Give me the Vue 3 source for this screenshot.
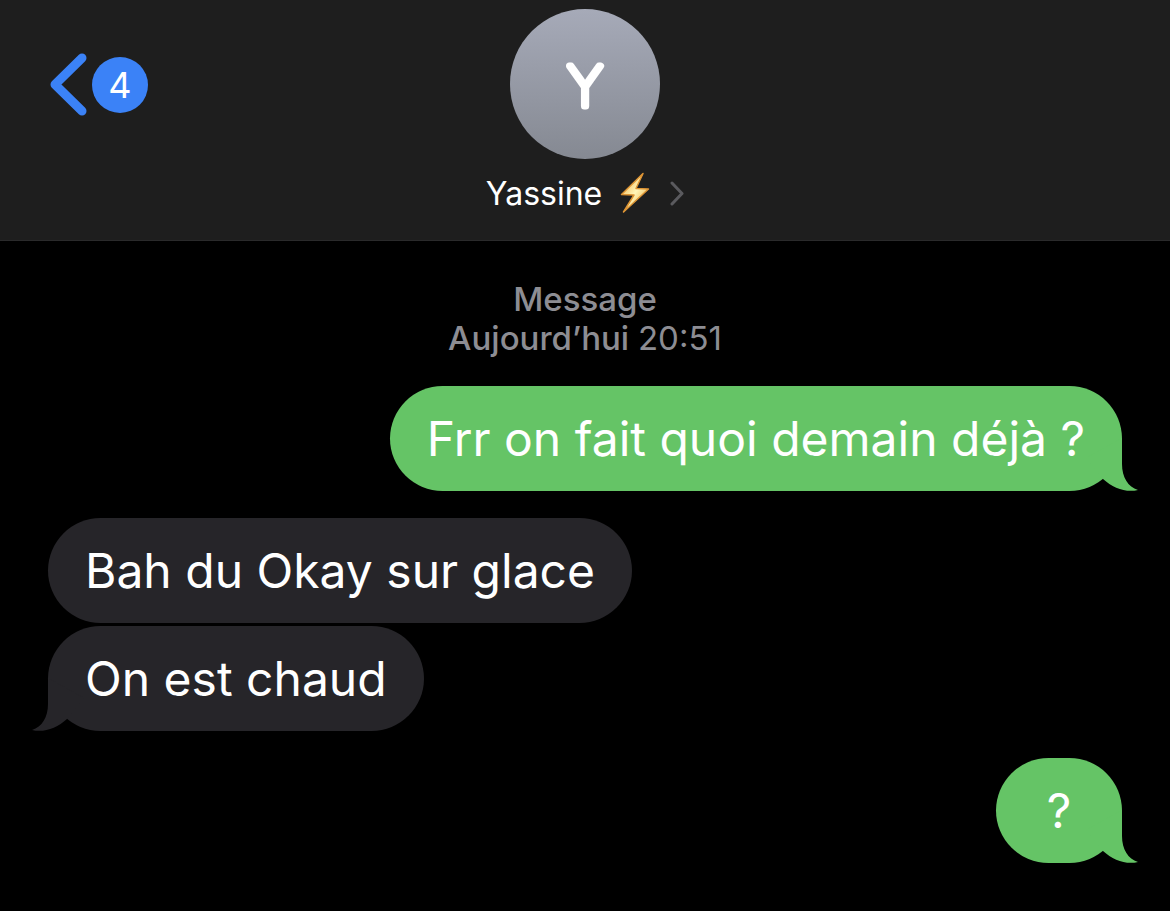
<script setup>
const contact = { initial: 'Y', name: 'Yassine', unread: 4 }

const messages = [
  { id: 1, from: 'me', text: 'Frr on fait quoi demain déjà ?', tail: true },
  { id: 2, from: 'them', text: 'Bah du Okay sur glace', tail: false },
  { id: 3, from: 'them', text: 'On est chaud', tail: true },
  { id: 4, from: 'me', text: '?', tail: true }
]

function startsGroup(i) {
  return i > 0 && messages[i].from !== messages[i - 1].from
}
</script>

<template>
  <div class="chat">
    <header class="chat__header">
      <button type="button" class="back" aria-label="Retour">
        <svg class="back__chevron" viewBox="0 0 38 64" aria-hidden="true">
          <path d="M33 5 L6 31.500 L33 58" />
        </svg>
        <span class="back__count">{{ contact.unread }}</span>
      </button>

      <button type="button" class="contact">
        <svg class="contact__avatar" viewBox="0 0 150 150" aria-hidden="true">
          <defs>
            <linearGradient id="avatar-fill" x1="0" y1="0" x2="0" y2="1">
              <stop offset="0" stop-color="#a6aab8" />
              <stop offset="1" stop-color="#858992" />
            </linearGradient>
          </defs>
          <circle cx="75" cy="75" r="75" fill="url(#avatar-fill)" />
          <text x="75" y="97" text-anchor="middle" class="contact__initial">{{ contact.initial }}</text>
        </svg>
        <span class="contact__row">
          <span class="contact__name">{{ contact.name }}</span>
          <svg class="contact__bolt" viewBox="0 0 30 42" aria-hidden="true">
            <defs>
              <linearGradient id="bolt-fill" x1="0" y1="0" x2="1" y2="1">
                <stop offset="0" stop-color="#f0a030" />
                <stop offset="0.5" stop-color="#fff6b8" />
                <stop offset="1" stop-color="#e8951f" />
              </linearGradient>
            </defs>
            <path
              d="M23 1.500 L1.500 22.500 L14 23 L3.500 40 L28.500 17 L16 16.500 Z"
              fill="url(#bolt-fill)"
              stroke="#dd9434"
              stroke-width="1.500"
              stroke-linejoin="round"
            />
          </svg>
          <svg class="contact__more" viewBox="0 0 14 26" aria-hidden="true">
            <path d="M2 3 L12 13.500 L2 24" />
          </svg>
        </span>
      </button>
    </header>

    <main class="thread">
      <p class="thread__stamp">
        Message<br />
        Aujourd’hui <span class="thread__time">20:51</span>
      </p>

      <div
        v-for="(m, i) in messages"
        :key="m.id"
        class="bubble"
        :class="[`bubble--${m.from}`, { 'bubble--first': startsGroup(i) }]"
      >
        {{ m.text }}
        <svg v-if="m.tail" class="bubble__tail" viewBox="0 0 52 53" aria-hidden="true">
          <path d="M36 0 V26 C36 39 42 49 52 52 C40 55 27 50 17 41 L0 20 Z" />
        </svg>
      </div>
    </main>
  </div>
</template>

<style>
body {
  margin: 0;
  background: #000000;
}
</style>

<style scoped>
.chat {
  min-height: 100vh;
  background: #000000;
  color: #ffffff;
  font-family: Inter, 'Liberation Sans', sans-serif;
}

button {
  padding: 0;
  border: 0;
  background: none;
  color: inherit;
  font: inherit;
  cursor: pointer;
}

/* ─── Header ─── */
.chat__header {
  display: grid;
  grid-template-columns: 1fr auto 1fr;
  align-items: start;
  padding: 9px 49px 25px;
  border-bottom: 1px solid #2a2a2b;
  background: #1e1e1e;
}

.back {
  display: flex;
  align-items: center;
  gap: 5px;
  height: 151px;
}

.back__chevron {
  width: 38px;
  height: 64px;
}

.back__chevron path {
  fill: none;
  stroke: #3b82f7;
  stroke-width: 9;
  stroke-linecap: round;
  stroke-linejoin: round;
}

.back__count {
  width: 56px;
  border-radius: 28px;
  background: #3b82f7;
  font-size: 36px;
  line-height: 56px;
  text-align: center;
}

.contact {
  display: flex;
  flex-direction: column;
  align-items: center;
  gap: 12px;
}

.contact__avatar {
  width: 150px;
  height: 150px;
}

.contact__initial {
  fill: #ffffff;
  stroke: #ffffff;
  stroke-width: 7px;
  stroke-linejoin: round;
  font-size: 54px;
  font-weight: 100;
}

.contact__row {
  display: flex;
  align-items: center;
  height: 44px;
}

.contact__name {
  font-size: 32px;
}

.contact__bolt {
  width: 30px;
  height: 42px;
  margin-left: 18px;
}

.contact__more {
  width: 14px;
  height: 26px;
  margin-left: 20px;
}

.contact__more path {
  fill: none;
  stroke: #5a5a5e;
  stroke-width: 3;
  stroke-linecap: round;
  stroke-linejoin: round;
}

/* ─── Messages ─── */
.thread {
  display: flex;
  flex-direction: column;
  gap: 3px;
  padding: 39px 48px;
}

.thread__stamp {
  margin: 0 0 25px;
  color: #8d8d93;
  font-size: 33px;
  font-weight: 500;
  line-height: 39px;
  text-align: center;
}

.thread__time {
  font-weight: 400;
}

.bubble {
  position: relative;
  box-sizing: border-box;
  min-width: 126px;
  padding: 1px 37px 0;
  border-radius: 53px;
  font-size: 48px;
  line-height: 104px;
  text-align: center;
}

.bubble--me {
  align-self: flex-end;
  background: #65c466;
}

.bubble--them {
  align-self: flex-start;
  background: #262529;
}

.bubble--first {
  margin-top: 24px;
}

.bubble__tail {
  position: absolute;
  right: -16px;
  bottom: 0;
  width: 52px;
  height: 53px;
  fill: #65c466;
}

.bubble--them .bubble__tail {
  right: auto;
  left: -16px;
  fill: #262529;
  transform: scaleX(-1);
}
</style>
